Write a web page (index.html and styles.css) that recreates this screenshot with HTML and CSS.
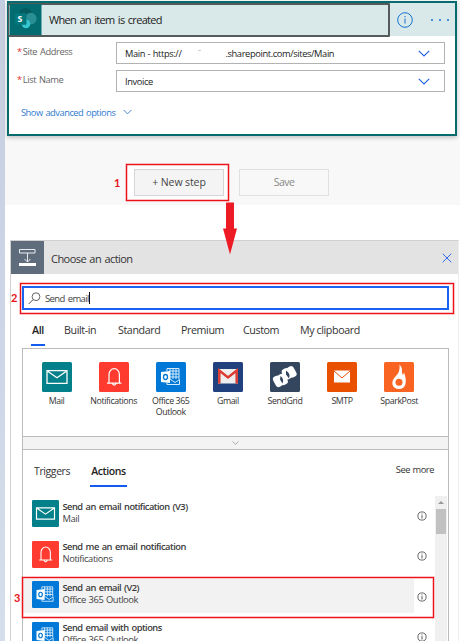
FILE: index.html
```html
<!DOCTYPE html>
<html lang="en">
<head>
<meta charset="utf-8">
<title>Choose an action</title>
<link rel="stylesheet" href="styles.css">
</head>
<body>
<svg class="defs" width="0" height="0">
  <symbol id="mail" viewBox="0 0 30 30"><rect width="30" height="30" rx="1.5" fill="#038089"/><path d="M5 8.700h20v12.600H5zM6 9.500l9 6.200 9-6.200" fill="none" stroke="#fff" stroke-width="1.300"/></symbol>
  <symbol id="bell" viewBox="0 0 30 30"><rect width="30" height="30" rx="1.500" fill="#ff3b30"/><path d="M8 21.200h14.400M10 21v-8.500a5.200 5.800 0 0 1 10.400 0V21M13.300 21.500q1.900 3.300 3.800 0" fill="none" stroke="#fff" stroke-width="1.200"/></symbol>
  <symbol id="outlook" viewBox="0 0 30 30"><rect width="30" height="30" rx="1.500" fill="#0078d7"/><path d="M11 9V6.500h12V17M14 9h9M14 12h9M14 15h9M14 6.500V17M17 6.500V17M20 6.500V17M14 17l5 3.500 4.500-3v5H11v-2" fill="none" stroke="#d5ebfc" stroke-width="1"/><path d="M5 10l9-1v12l-9-1z" fill="#fff"/><ellipse cx="9.500" cy="15" rx="2" ry="2.500" fill="none" stroke="#0078d7" stroke-width="1.300"/></symbol>
  <symbol id="info" viewBox="0 0 10 10"><circle cx="5" cy="5" r="4.100" fill="none" stroke="currentColor" stroke-width=".8"/><path d="M5 4.200v3.300M5 2.500v.9" stroke="currentColor" stroke-width=".9"/></symbol>
  <symbol id="chev" viewBox="0 0 12 7"><path d="M.8.800L6 6 11.200.8" fill="none" stroke="currentColor" stroke-width="1.200"/></symbol>
</svg>
<div class="page">
  <section class="flow">
    <div class="trigger">
      <header class="trigger-head">
        <div class="trigger-title">
          <svg class="sp" viewBox="0 0 33 32"><rect width="33" height="32" fill="#036c70"/><circle cx="16.500" cy="10.500" r="6.500" fill="#045b60"/><circle cx="22" cy="15" r="6" fill="#2a8f94"/><circle cx="17" cy="20.500" r="4.500" fill="#37c6d0"/><rect x="5.500" y="9.500" width="12" height="12" rx="1" fill="#03787c"/><text x="8.300" y="19">S</text></svg>
          <span>When an item is created</span>
        </div>
        <svg class="head-info" viewBox="0 0 16 16"><circle cx="8" cy="8" r="7.300" fill="none" stroke="#1473d1"/><path d="M8 6.500v5M8 4v1.200" stroke="#1473d1"/></svg>
        <span class="dots"><i></i><i></i><i></i></span>
      </header>
      <div class="field"><label><b>*</b>Site Address</label><div class="select"><span>Main - https://</span><span class="smudge"></span><span>.sharepoint.com/sites/Main</span><svg><use href="#chev"/></svg></div></div>
      <div class="field"><label><b>*</b>List Name</label><div class="select"><span>Invoice</span><svg><use href="#chev"/></svg></div></div>
      <div class="advanced"><span>Show advanced options</span><svg><use href="#chev"/></svg></div>
    </div>
    <div class="buttons">
      <span class="mark">1</span>
      <div class="callout"><button>+ New step</button></div>
      <button class="save">Save</button>
    </div>
  </section>
  <svg class="arrow" viewBox="0 0 14 52"><path d="M3 0h8v26h3L7 52 0 26h3z" fill="#ed1c24"/></svg>
  <section class="picker">
    <header class="picker-head">
      <svg class="step" viewBox="0 0 33 33"><rect width="33" height="33" fill="#5f6c7b"/><path d="M8.500 8.500h15.500v3.500H8.500zM16.500 12v9M13.500 18l3 3 3-3" fill="none" stroke="#e8ebee"/><path d="M8 22h17v3H8z" fill="#fff"/></svg>
      <span class="choose">Choose an action</span>
      <svg class="close" viewBox="0 0 10 10"><path d="M.7.700l8.600 8.600M9.300.7L.7 9.300" stroke="#245df0" stroke-width=".9"/></svg>
    </header>
    <div class="search-callout"><span class="mark two">2</span><div class="search"><svg viewBox="0 0 13 13"><circle cx="8" cy="4.700" r="3.900" fill="none" stroke="#555" stroke-width=".9"/><path d="M5.200 7.500L.7 12" stroke="#555"/></svg><span>Send email</span><i></i></div></div>
    <nav class="tabs"><span class="on">All</span><span>Built-in</span><span>Standard</span><span>Premium</span><span>Custom</span><span>My clipboard</span></nav>
    <div class="results">
      <div class="connectors">
        <div><svg><use href="#mail"/></svg><span>Mail</span></div>
        <div><svg><use href="#bell"/></svg><span>Notifications</span></div>
        <div><svg><use href="#outlook"/></svg><span>Office 365<br>Outlook</span></div>
        <div><svg viewBox="0 0 30 30"><rect width="30" height="30" rx="1.500" fill="#20417e"/><path d="M5 7h20v14.500H5z" fill="#eee"/><path d="M6.300 21.500V8.500L15 15.500l8.700-7v13" fill="none" stroke="#db3b30" stroke-width="2.500"/></svg><span>Gmail</span></div>
        <div><svg viewBox="0 0 30 30"><rect width="30" height="30" rx="1.500" fill="#34465e"/><g fill="#fff"><rect x="4" y="13.500" width="7.500" height="11.500" rx="3" transform="rotate(-28 8 19)"/><rect x="9" y="11.500" width="7.500" height="11.500" rx="3" transform="rotate(-28 13 17)"/><rect x="13" y="6" width="7.500" height="11.500" rx="3" transform="rotate(-28 17 12)"/><rect x="18" y="4" width="7.500" height="11.500" rx="3" transform="rotate(-28 22 10)"/></g><path d="M10.500 14q4 3 2 7.500l-2.500-4zM16 8.500q5 3 3 8l-3-4z" fill="#34465e"/></svg><span>SendGrid</span></div>
        <div><svg viewBox="0 0 30 30"><rect width="30" height="30" rx="1.500" fill="#e95000"/><path d="M7 8.500h16v12H7z" fill="#fff"/><path d="M7 9l8 7 8-7" fill="none" stroke="#e95000"/></svg><span>SMTP</span></div>
        <div><svg viewBox="0 0 30 30"><rect width="30" height="30" rx="1.500" fill="#fa6423"/><path d="M15.500 2.500c4.500 5 1 7 3.500 10.500l1-2.500c3.500 9 2 16.500-5 16.500S6 20 11.500 14.500c3-3 4.500-6 4-12z" fill="#fff"/><circle cx="15" cy="20.300" r="3.500" fill="#fa6423"/></svg><span>SparkPost</span></div>
      </div>
      <div class="collapse"><svg><use href="#chev"/></svg></div>
      <div class="kinds"><span>Triggers</span><span class="current">Actions</span><span class="more">See more</span></div>
      <div class="list">
        <div class="rows">
          <div class="row"><svg class="ic"><use href="#mail"/></svg><p><span>Send an email notification (V3)</span><small>Mail</small></p><svg class="inf"><use href="#info"/></svg></div>
          <div class="row"><svg class="ic"><use href="#bell"/></svg><p><span>Send me an email notification</span><small>Notifications</small></p><svg class="inf"><use href="#info"/></svg></div>
          <div class="row sel"><svg class="ic"><use href="#outlook"/></svg><p><span>Send an email (V2)</span><small>Office 365 Outlook</small></p><svg class="inf"><use href="#info"/></svg><div class="pick"><span class="mark three">3</span></div></div>
          <div class="row"><svg class="ic"><use href="#outlook"/></svg><p><span>Send email with options</span><small>Office 365 Outlook</small></p><svg class="inf"><use href="#info"/></svg></div>
        </div>
        <div class="scroll"><i></i><b></b></div>
      </div>
    </div>
  </section>
</div>
</body>
</html>
```
FILE: styles.css
```css
* { box-sizing: border-box; }
html, body { margin: 0; height: 641px; overflow: hidden; }
body { font-family: "Open Sans", "Noto Sans", sans-serif; font-size: 10px; color: #333; background: #fff; white-space: nowrap; }
svg { display: block; flex: none; }
.defs { position: absolute; }
.page { position: relative; height: 641px; padding-left: 5px; background: linear-gradient(#c5cde0, #d5deec) left / 5px 100% no-repeat; }
.flow { height: 205px; padding: 1px 3px 0 2px; background: #f8f8f8; }
.trigger { height: 135px; border: 2px solid #066b6e; background: #fff; box-shadow: 0 2px 4px #0003; }
.trigger-head { display: flex; align-items: center; height: 33px; background: #d9e8e8; }
.trigger-title { display: flex; align-items: center; width: 382px; height: 34px; margin-left: -1px; border: 2px solid #555a5b; border-left-width: 1px; border-radius: 1px; font-size: 11px; letter-spacing: -.7px; word-spacing: 1.2px; color: #222; }
.sp { width: 33px; height: 31px; margin-right: 7px; }
.sp text { font: bold 9px "Open Sans", sans-serif; letter-spacing: 0; fill: #fff; }
.head-info { width: 16px; height: 16px; margin-left: 7px; }
.dots { display: flex; gap: 6px; margin-left: 18px; }
.dots i { width: 2px; height: 2px; border-radius: 1px; background: #1473d1; }
.field { display: flex; align-items: center; height: 22px; margin: 6px 0 0 8px; color: #666; }
.field label { width: 99px; font-size: 9.3px; letter-spacing: -.4px; word-spacing: .8px; margin-top: -3px; }
.field b { color: #e03030; margin-right: 1px; font-weight: 400; }
.select { display: flex; align-items: center; width: 329px; height: 22px; padding-left: 8px; border: 1px solid #b3b3b3; color: #222; font-size: 9.3px; letter-spacing: -.38px; word-spacing: .5px; }
.select svg { width: 12px; height: 7px; margin: 0 14px 0 auto; color: #2463e8; }
.smudge { width: 3px; height: 1px; margin: -6px 24px 0 17px; background: #d0d0d0; }
.advanced { display: flex; align-items: center; gap: 8px; margin: 13px 0 0 12px; height: 14px; color: #2f7bd0; font-size: 9.3px; letter-spacing: -.48px; word-spacing: .8px; }
.advanced svg { width: 9px; height: 6px; }
.buttons { display: flex; align-items: center; height: 38px; margin: 27px 0 0 107px; }
.mark { color: #e81318; font: bold 11px Lato, sans-serif; width: 12px; }
.callout { width: 103px; height: 37px; padding: 4px 0 0 7px; border: 1px solid #ec1218; box-shadow: 0 0 0 .5px #ec121880, inset 0 0 0 .5px #ec121880; background: #fff; }
.buttons button { width: 90px; height: 27px; padding: 0; border: 1px solid #d5d5d5; background: #f4f4f4; color: #444; font: 10.5px "Open Sans", sans-serif; letter-spacing: -.1px; }
.buttons .save { margin-left: 10px; background: #f8f8f8; color: #888; border-color: #e0e0e0; letter-spacing: -.5px; }
.arrow { position: absolute; left: 223px; top: 202px; width: 14px; height: 53px; z-index: 2; }
.picker { height: 401px; margin: 35px 1px 0 5px; border: 1px solid #d0d0d0; border-right-color: #eee; border-bottom: 0; }
.picker-head { display: flex; align-items: center; height: 33px; background: #e3e3e3; font-size: 11px; letter-spacing: -.55px; word-spacing: 1px; color: #333; }
.choose { padding-top: 1px; }
.step { width: 33px; height: 33px; margin-right: 7px; }
.close { width: 10px; height: 10px; margin: 0 6px 0 auto; }
.search-callout { position: relative; width: 434px; height: 31px; margin: 9px 0 0 9px; padding: 2px 0 0 1px; border: 1px solid #ec1218; box-shadow: 0 0 0 .5px #ec121880, inset 0 0 0 .5px #ec121880; }
.two { position: absolute; left: -10px; top: 7px; }
.search { display: flex; align-items: center; height: 24px; width: 427px; border: 2px solid #1c62f2; padding-left: 4px; font-size: 9.5px; letter-spacing: -.6px; word-spacing: 1px; color: #444; }
.search svg { width: 13px; height: 13px; margin-right: 4px; }
.search i { width: 1px; height: 12px; background: #111; }
.tabs { display: grid; grid-template-columns: 33px 54px 63px 62px 57px auto; height: 32px; padding: 7px 0 0 20px; font-size: 10.7px; letter-spacing: -.4px; }
.tabs span { height: 25px; line-height: 18px; }
.tabs .on { width: 14px; padding-left: 1px; color: #222; font-weight: 600; border-bottom: 2px solid #145cf0; }
.results { width: 427px; height: 293px; margin: 2px 0 0 11px; border: 1px solid #bbb; border-bottom: 0; }
.connectors { display: grid; grid-template-columns: repeat(7, 57.1px); height: 87px; padding: 13px 0 0 5px; text-align: center; font-size: 8.8px; line-height: 11px; letter-spacing: -.4px; }
.connectors svg { width: 30px; height: 30px; margin: 0 auto 4px; }
.collapse { display: flex; justify-content: center; align-items: center; height: 14px; border: 1px solid #bbb; border-width: 1px 0; background: #f3f3f3; }
.collapse svg { width: 7px; height: 4px; color: #888; }
.kinds { display: flex; height: 46px; padding: 11px 14px 0 11px; font-size: 10.5px; line-height: 20px; letter-spacing: -.4px; }
.kinds span { height: 26px; }
.kinds .current { width: 37px; margin-left: 20px; padding-left: 1px; color: #222; font-weight: 600; letter-spacing: -.4px; border-bottom: 2px solid #145cf0; }
.kinds .more { margin-left: auto; font-size: 9.3px; line-height: 17px; letter-spacing: -.45px; word-spacing: .6px; }
.list { display: flex; height: 146px; }
.rows { width: 412px; padding-top: 1px; }
.row { position: relative; display: flex; align-items: center; height: 40.5px; padding-left: 9px; }
.sel { background: linear-gradient(#f2f2f2, #f2f2f2) 0 1px / 391px 34px no-repeat; }
.ic { width: 27px; height: 27px; margin-top: -7px; }
.row p { display: flex; flex-direction: column; margin: -9px 0 0 3.5px; font-size: 9.3px; line-height: 12px; font-weight: 600; letter-spacing: -.5px; word-spacing: 1px; color: #3a3a3a; }
.row small { font-size: 9.4px; font-weight: 400; letter-spacing: -.4px; word-spacing: .6px; color: #444; }
.inf { width: 10px; height: 10px; margin: -3px 8px 0 auto; color: #444; }
.pick { position: absolute; left: -1px; top: -1px; width: 412px; height: 41px; border: 1px solid #ec1218; box-shadow: 0 0 0 .5px #ec121880, inset 0 0 0 .5px #ec121880; }
.three { position: absolute; left: -9px; top: 13px; }
.scroll { width: 12px; padding: 5px 1px; background: #f0f0f0; }
.scroll i { display: block; width: 0; margin: 0 auto 5px; border: 3px solid transparent; border-top: 0; border-bottom-color: #999; }
.scroll b { display: block; height: 25px; background: #c1c1c1; }
```
